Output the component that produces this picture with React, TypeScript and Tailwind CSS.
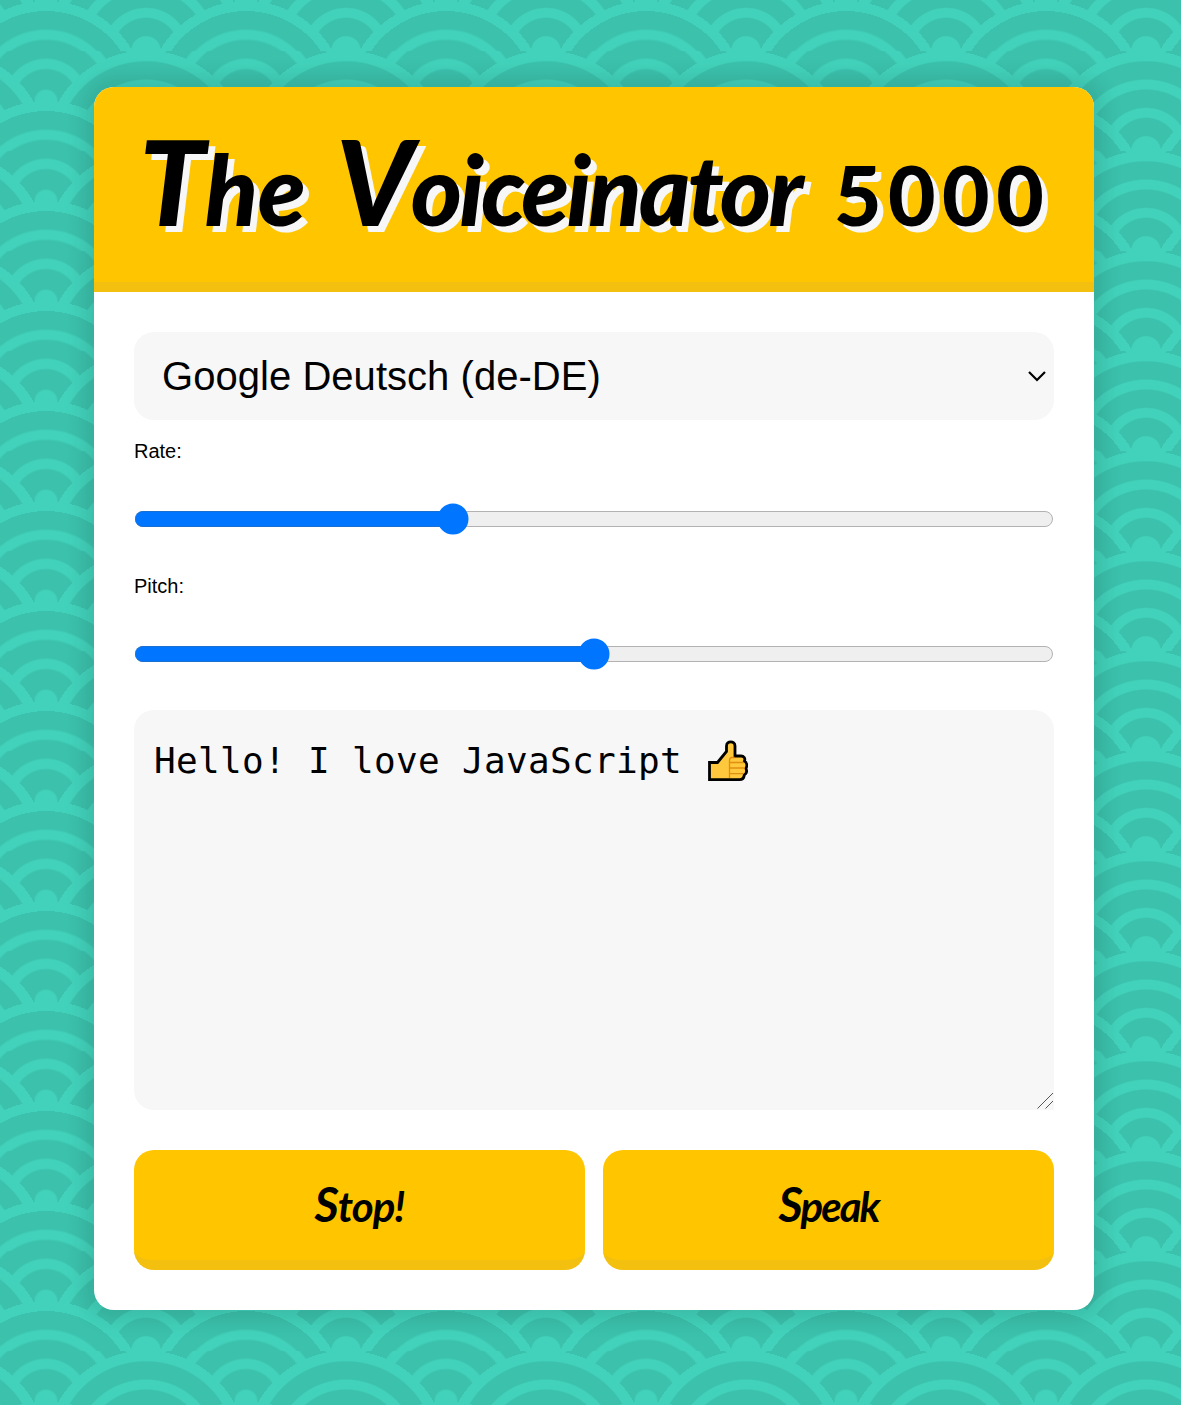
import React from "react";

const WAVES =
  "bg-[#3bc1ac] bg-[position:46px_51px] bg-[length:200px_100px] bg-[image:radial-gradient(circle_at_100%_150%,#3bc1ac_24%,#42d2bb_25%,#42d2bb_28%,#3bc1ac_29%,#3bc1ac_36%,#42d2bb_36%,#42d2bb_40%,transparent_40%,transparent),radial-gradient(circle_at_0_150%,#3bc1ac_24%,#42d2bb_25%,#42d2bb_28%,#3bc1ac_29%,#3bc1ac_36%,#42d2bb_36%,#42d2bb_40%,transparent_40%,transparent),radial-gradient(circle_at_50%_100%,#42d2bb_10%,#3bc1ac_11%,#3bc1ac_23%,#42d2bb_24%,#42d2bb_30%,#3bc1ac_31%,#3bc1ac_43%,#42d2bb_44%,#42d2bb_50%,#3bc1ac_51%,#3bc1ac_63%,#42d2bb_64%,#42d2bb_71%,transparent_71%,transparent),radial-gradient(circle_at_100%_50%,#42d2bb_5%,#3bc1ac_6%,#3bc1ac_15%,#42d2bb_16%,#42d2bb_20%,#3bc1ac_21%,#3bc1ac_30%,#42d2bb_31%,#42d2bb_35%,#3bc1ac_36%,#3bc1ac_45%,#42d2bb_46%,#42d2bb_49%,transparent_50%,transparent),radial-gradient(circle_at_0_50%,#42d2bb_5%,#3bc1ac_6%,#3bc1ac_15%,#42d2bb_16%,#42d2bb_20%,#3bc1ac_21%,#3bc1ac_30%,#42d2bb_31%,#42d2bb_35%,#3bc1ac_36%,#3bc1ac_45%,#42d2bb_46%,#42d2bb_49%,transparent_50%,transparent)]";

function Slider({ label, position }: { label: string; position: number }) {
  return (
    <div className="h-[135px]">
      <div className="pt-[4px] text-[20px] leading-[23px]">{label}</div>
      <div
        role="slider"
        aria-label={label}
        aria-valuenow={position}
        className="relative mx-px mt-[48px] h-4 rounded-full border border-[#b2b2b2] bg-[#efefef]"
      >
        <div className="absolute -left-px -top-px h-4 rounded-l-full border-y border-[#1a6fd0] bg-[#0075ff]" style={{ width: position }} />
        <svg className="absolute top-[-9px] size-8 -translate-x-1/2" viewBox="0 0 32 32" style={{ left: position }}>
          <circle cx="16" cy="16" r="15.5" fill="#0075ff" />
        </svg>
      </div>
    </div>
  );
}

function ThumbsUp() {
  return (
    <svg className="mt-[2px] h-[42px] w-[40px]" viewBox="0 0 40 42" fill="none">
      <path
        d="M1.5 22.5H9.5L18.5 11.5V6C18.5 0.5 27 0.5 27 6V16H33C36 16 37.5 18.5 36.5 21C39 22.5 39.2 26 38 28.5C39.2 31.5 38 34 36.3 35C36 38 34.5 39.7 31.5 39.7H1.5Z"
        fill="#ffc83d"
        stroke="#000"
        strokeWidth="2.8"
      />
      <path d="M27 17.5H24Q21.5 17.5 21.5 20.5V38M21.5 22.5H36M21.5 28H37M21.5 33.7H36" stroke="#d67d00" strokeOpacity=".75" strokeWidth="1.3" />
    </svg>
  );
}

function Action({ children, className }: { children: string; className: string }) {
  return (
    <button
      className={
        "h-[120px] flex-1 rounded-[20px] border-b-[10px] border-[#f3c010] bg-[#ffc600] text-center font-['Lato'] text-[42px] font-bold italic leading-[60px] first-letter:text-[47px] " +
        className
      }
    >
      {children}
    </button>
  );
}

export default function App() {
  return (
    <div className={"h-[1405px] w-full overflow-hidden pt-[87px] font-['Liberation_Sans',sans-serif] text-black " + WAVES}>
      <main className="ml-[94px] h-[1223px] w-[1000px] overflow-hidden rounded-[20px] bg-white shadow-[0_0_20px_10px_rgba(0,0,0,0.1)]">
        <h1 className="flex h-[205px] items-baseline border-b-[10px] border-[#f3c010] bg-[#ffc600] pl-[45px] pt-[19px] font-['Lato'] text-[98px] font-black italic leading-[150px] whitespace-nowrap [text-shadow:6px_6px_0_#f7f7f7]">
          <span className="block w-[197px] tracking-[-0.5px] first-letter:text-[118px]">The</span>
          <span className="block w-[498px] tracking-[-2.9px] first-letter:text-[118px]">Voiceinator</span>
          <span className="block text-[82px] not-italic tracking-[6.5px]">5000</span>
        </h1>
        <div className="px-10 pt-10">
          <div className="relative">
            <select className="block h-[88px] w-full appearance-none rounded-[20px] bg-[#f7f7f7] px-7 text-[40px] tracking-[0.04px]">
              <option>Google Deutsch (de-DE)</option>
            </select>
            <svg className="pointer-events-none absolute right-[7px] top-[37px] h-[14px] w-5" viewBox="0 0 20 14" fill="none">
              <path d="M2 3L10 11L18 3" stroke="#000" strokeWidth="2.2" />
            </svg>
          </div>
          <div className="h-[290px] pt-[16px]">
            <Slider label="Rate:" position={317} />
            <Slider label="Pitch:" position={458} />
          </div>
          <div className="relative h-[400px] rounded-[20px] rounded-br-none bg-[#f7f7f7] px-5 pt-[28px]">
            <div className="flex font-['DejaVu_Sans_Mono',monospace] text-[36px] leading-[46px] tracking-[0.325px]">
              <span className="w-[554px] whitespace-nowrap">Hello! I love JavaScript</span>
              <ThumbsUp />
            </div>
            <svg className="absolute bottom-0 right-0 size-[18px]" viewBox="0 0 18 18">
              <path d="M1.5 16.5L17 1M9.5 16.5L17 9" stroke="#555" strokeWidth="1" />
            </svg>
          </div>
          <div className="mt-10 flex gap-[18px]">
            <Action className="tracking-[-1px]">Stop!</Action>
            <Action className="tracking-[-2px]">Speak</Action>
          </div>
        </div>
      </main>
    </div>
  );
}
